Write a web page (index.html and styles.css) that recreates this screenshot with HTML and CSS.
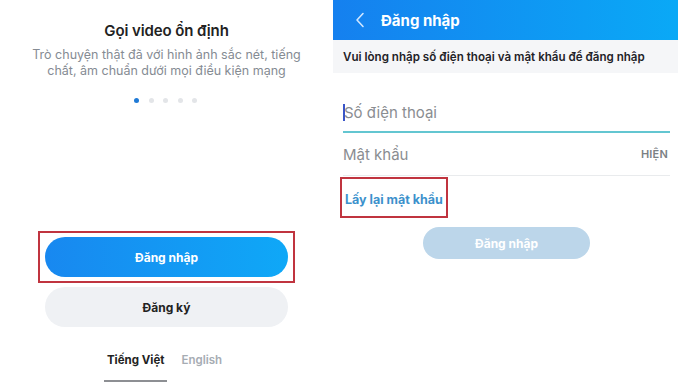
FILE: index.html
```html
<!DOCTYPE html>
<html lang="vi">
<head>
<meta charset="utf-8">
<link rel="stylesheet" href="styles.css">
</head>
<body>
<div class="screens">
  <section class="intro">
    <h1 class="intro-title">Gọi video ổn định</h1>
    <p class="intro-text">Trò chuyện thật đã với hình ảnh sắc nét, tiếng<br>chất, âm chuẩn dưới mọi điều kiện mạng</p>
    <div class="dots">
      <span class="dot active"></span><span class="dot"></span><span class="dot"></span><span class="dot"></span><span class="dot"></span>
    </div>
    <div class="highlight highlight-btn">
      <button class="btn btn-primary">Đăng nhập</button>
    </div>
    <button class="btn btn-secondary">Đăng ký</button>
    <div class="langs">
      <span class="lang lang-active">Tiếng Việt</span>
      <span class="lang">English</span>
    </div>
  </section>
  <section class="login">
    <header class="topbar">
      <svg class="back" width="10" height="16" viewBox="0 0 10 16"><path d="M8 1.5 L2 8 L8 14.5" fill="none" stroke="#cfe6ff" stroke-width="1.6" stroke-linecap="round" stroke-linejoin="round"/></svg>
      <span class="topbar-title">Đăng nhập</span>
    </header>
    <div class="hint">Vui lòng nhập số điện thoại và mật khẩu để đăng nhập</div>
    <div class="form">
      <div class="field field-focus"><span class="caret"></span><span class="placeholder">Số điện thoại</span></div>
      <div class="field field-pass"><span class="placeholder">Mật khẩu</span><span class="show">HIỆN</span></div>
      <div class="forgot-row"><span class="highlight highlight-link"><a class="forgot">Lấy lại mật khẩu</a></span></div>
      <button class="btn btn-disabled">Đăng nhập</button>
    </div>
  </section>
</div>
</body>
</html>
```
FILE: styles.css
```css
* { box-sizing: border-box; }
html, body { margin: 0; padding: 0; background: #fff; }
body { font-family: Inter, "Noto Sans", sans-serif; width: 680px; height: 382px; overflow: hidden; }
.screens { display: flex; height: 382px; }

.intro { width: 333px; display: flex; flex-direction: column; align-items: center; }
.intro-title { margin: 21px 0 0; font-size: 15px; line-height: 20px; font-weight: 600; color: #222; letter-spacing: -0.1px; }
.intro-text { margin: 6px 0 0; font-size: 12.5px; line-height: 16px; color: #858b93; text-align: center; }
.dots { display: flex; gap: 9.5px; margin-top: 19px; margin-left: -2px; }
.dot { width: 5px; height: 5px; border-radius: 50%; background: #e3e5e8; }
.dot.active { background: #1f7ad6; }

.highlight { border: 2px solid #c0343f; }
.highlight-btn { margin-top: 128px; padding: 4px 5px; width: 257px; }
.btn { border: none; font-family: inherit; font-weight: 700; font-size: 12px; border-radius: 20px; display: block; }
.btn-primary { width: 243px; height: 40px; color: #fff; background: linear-gradient(90deg, #1888f0, #0fa8f7); }
.btn-secondary { width: 243px; height: 40px; margin-top: 4px; background: #eff1f4; color: #222; }
.langs { display: flex; gap: 14px; margin-top: 26px; margin-left: -4px; }
.lang { font-size: 11.5px; font-weight: 600; color: #a6acb3; padding-bottom: 13px; }
.lang-active { color: #222; font-weight: 700; border-bottom: 2px solid #8d8f93; padding: 0 3px 13px; margin-left: -3px; }

.login { flex: 1; display: flex; flex-direction: column; padding-right: 2px; }
.topbar { height: 40px; display: flex; align-items: center; padding-left: 22px; background: linear-gradient(90deg, #1580ef, #0aa9f6); }
.back { margin-right: 16px; }
.topbar-title { color: #fff; font-size: 15px; font-weight: 700; }
.hint { height: 33px; display: flex; align-items: center; padding-left: 10px; background: #f5f6f8; font-size: 11.6px; font-weight: 600; color: #1f2227; }
.form { padding: 0 8px 0 10px; display: flex; flex-direction: column; }
.field { display: flex; align-items: center; height: 44px; }
.field-focus { margin-top: 28px; height: 32px; border-bottom: 2px solid #63c6d1; align-items: flex-start; padding-top: 3px; }
.caret { width: 2px; height: 17px; background: #3a55c8; margin-right: -1px; }
.placeholder { font-size: 15px; color: #8a8d91; line-height: 17px; }
.field-pass { justify-content: space-between; border-bottom: 1px solid #e9ebed; height: 43px; }
.show { font-size: 11px; color: #7b7f84; font-weight: 600; letter-spacing: 0.2px; margin-right: 2px; }
.forgot-row { display: flex; margin-top: 1px; margin-left: -3px; }
.highlight-link { padding: 9px 3px 8px 3px; }
.forgot { font-size: 12.5px; font-weight: 700; color: #3c91cc; }
.btn-disabled { width: 167px; height: 32px; margin: 9px 0 0 80px; background: #bcd6ea; color: #fff; border-radius: 16px; }
```
